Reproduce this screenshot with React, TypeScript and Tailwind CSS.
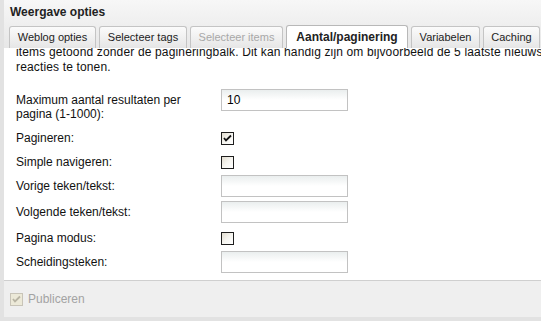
import React from "react";

const font = { fontFamily: '"Liberation Sans", Arial, sans-serif' };

function Tab({ label, w, active, disabled }: { label: string; w: number; active?: boolean; disabled?: boolean }) {
  return (
    <div
      style={{ width: w }}
      className={`flex items-center justify-center whitespace-nowrap border border-b-0 rounded-t-[3px] ${
        active
          ? "h-[23px] bg-white border-[#b8b8b8] font-bold text-[12px] text-[#222]"
          : "h-[22px] bg-gradient-to-b from-[#fbfbfb] to-[#e6e6e6] border-[#c4c4c4] text-[11px]"
      } ${disabled ? "text-[#a8a8a8]" : active ? "" : "text-[#222]"}`}
    >
      {label}
    </div>
  );
}

function TextInput({ value = "" }: { value?: string }) {
  return (
    <div className="w-[127px] h-[22px] border border-[#c2c2c2] bg-gradient-to-b from-[#eaeeee] via-white to-white flex items-center px-[5px] text-[12px] text-black">
      {value}
    </div>
  );
}

function Check({ checked }: { checked?: boolean }) {
  return (
    <div className="w-[13px] h-[13px] border border-[#1e1e1e] bg-gradient-to-br from-[#e2ddd0] via-[#f6f5f0] to-white flex items-center justify-center">
      {checked && (
        <svg width="9" height="9" viewBox="0 0 9 9">
          <path d="M1 4 L3 6.5 L8 1.5" stroke="#111" strokeWidth="1.8" fill="none" />
        </svg>
      )}
    </div>
  );
}

function Row({ label, children, h }: { label: string; children: React.ReactNode; h: number }) {
  return (
    <div className="flex items-center" style={{ height: h }}>
      <div className="w-[217px] pl-[12px] text-[12px] text-[#111]">{label}</div>
      {children}
    </div>
  );
}

export default function App() {
  return (
    <div className="w-[541px] h-[321px] bg-[#e2e2e2] pl-[4px] overflow-hidden" style={font}>
      <div className="h-[317px] flex flex-col bg-[#efefef]">
        <div className="bg-gradient-to-b from-[#f7f7f7] to-[#e7e7e7] h-[48px] flex flex-col">
          <div className="h-[26px] flex items-center pl-[6px] pb-[3px] text-[12px] font-bold text-[#222]">Weergave opties</div>
          <div className="flex items-end gap-[3px] pl-[5px] h-[22px]">
            <Tab label="Weblog opties" w={87} />
            <Tab label="Selecteer tags" w={88} />
            <Tab label="Selecteer items" w={93} disabled />
            <Tab label="Aantal/paginering" w={122} active />
            <Tab label="Variabelen" w={69} />
            <Tab label="Caching" w={57} />
          </div>
        </div>
        <div className="h-[233px] bg-white border-b border-[#cfcfcf] overflow-hidden">
          <div className="-mt-[3px] pl-[12px] text-[12px] leading-[15px] tracking-[0.15px] text-[#111] whitespace-nowrap">
            <div>items getoond zonder de pagineringbalk. Dit kan handig zijn om bijvoorbeeld de 5 laatste nieuws</div>
            <div>reacties te tonen.</div>
          </div>
          <div className="mt-[14px] flex items-start h-[32px]">
            <div className="w-[217px] pl-[12px] pt-[4px] text-[12px] leading-[14px] text-[#111]">
              Maximum aantal resultaten per
              <br />
              pagina (1-1000):
            </div>
            <TextInput value="10" />
          </div>
          <div className="mt-[5px]">
            <Row label="Pagineren:" h={24}>
              <Check checked />
            </Row>
            <Row label="Simple navigeren:" h={24}>
              <Check />
            </Row>
            <Row label="Vorige teken/tekst:" h={24}>
              <TextInput />
            </Row>
            <Row label="Volgende teken/tekst:" h={28}>
              <TextInput />
            </Row>
            <Row label="Pagina modus:" h={24}>
              <Check />
            </Row>
            <Row label="Scheidingsteken:" h={23}>
              <TextInput />
            </Row>
          </div>
        </div>
        <div className="flex-1 flex items-center gap-[5px] pl-[6px] text-[12px] text-[#a3a3a3]">
          <div className="w-[13px] h-[13px] border border-[#c8c4b8] bg-[#ece9d8] flex items-center justify-center">
            <svg width="9" height="9" viewBox="0 0 9 9">
              <path d="M1 4 L3 6.5 L8 1.5" stroke="#b8b4a4" strokeWidth="1.8" fill="none" />
            </svg>
          </div>
          Publiceren
        </div>
      </div>
    </div>
  );
}
